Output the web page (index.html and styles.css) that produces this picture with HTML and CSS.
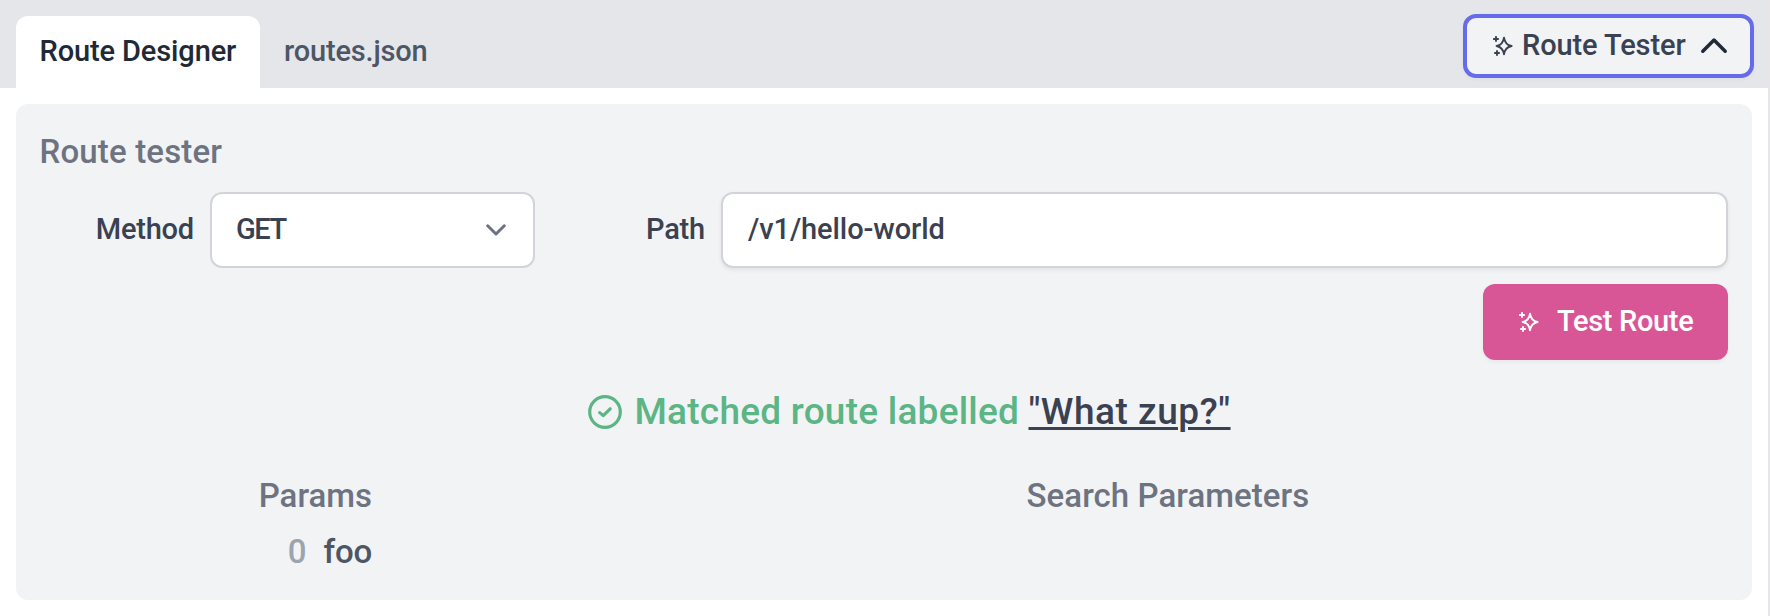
FILE: index.html
```html
<!DOCTYPE html>
<html lang="en">
<head>
<meta charset="utf-8">
<title>Route Designer</title>
<link rel="stylesheet" href="styles.css">
</head>
<body>
<svg class="defs" width="0" height="0" aria-hidden="true">
  <symbol id="sparkles" viewBox="0 0 20 20">
    <path d="M11 1.6 Q12 8.8 18.6 10 Q12 11.2 11 18.4 Q10 11.2 3.6 10 Q10 8.8 11 1.6 Z M3 .9 V5.1 M.9 3 H5.1 M4 14.9 V19.1 M1.9 17 H6.1" fill="none" stroke="currentColor" stroke-width="1.9" stroke-linecap="round" stroke-linejoin="round"/>
  </symbol>
</svg>
<div class="app">
  <header class="topbar">
    <nav class="tabs">
      <a class="tab tab-active">Route Designer</a>
      <a class="tab tab-file">routes.json</a>
    </nav>
    <button class="toggle" type="button">
      <svg class="sparkles" viewBox="0 0 20 20"><use href="#sparkles"/></svg>
      <span class="toggle-label">Route Tester</span>
      <svg class="toggle-chevron" viewBox="0 0 28 18"><path d="M2.8 14.2 L14 3 L25.2 14.2" fill="none" stroke="currentColor" stroke-width="3.5" stroke-linecap="round" stroke-linejoin="round"/></svg>
    </button>
  </header>
  <main class="panel">
    <h2 class="title">Route tester</h2>
    <form class="fields">
      <label class="label">Method</label>
      <div class="select"><span class="select-value">GET</span>
        <svg class="select-chevron" viewBox="0 0 20 12"><path d="M1.7 1.8 L10 10 L18.3 1.8" fill="none" stroke="currentColor" stroke-width="3" stroke-linecap="round" stroke-linejoin="round"/></svg>
      </div>
      <label class="label">Path</label>
      <div class="input">/v1/hello-world</div>
    </form>
    <div class="actions">
      <button class="submit" type="button">
        <svg class="sparkles" viewBox="0 0 20 20"><use href="#sparkles"/></svg>
        <span>Test Route</span>
      </button>
    </div>
    <p class="result">
      <svg class="check" viewBox="0 0 34 34"><circle cx="17" cy="17" r="15.3" fill="none" stroke="currentColor" stroke-width="3.2"/><path d="M11.7 17.6 L15.2 20.6 L22.2 13.8" fill="none" stroke="currentColor" stroke-width="3.2" stroke-linecap="round" stroke-linejoin="round"/></svg>
      <span class="matched">Matched route labelled</span>
      <a class="route-link">"What zup?"</a>
    </p>
    <div class="columns">
      <section class="params">
        <h3 class="heading">Params</h3>
        <div class="param"><span class="index">0</span><span class="name">foo</span></div>
      </section>
      <section class="search">
        <h3 class="heading">Search Parameters</h3>
      </section>
    </div>
  </main>
</div>
</body>
</html>
```
FILE: styles.css
```css
* { box-sizing: border-box; }
body {
  margin: 0;
  background: #fff;
  color: #3a4151;
  font: 500 29px/36px Roboto, "Noto Sans", sans-serif;
}
button { font: inherit; }
h2, h3, p { margin: 0; font-weight: 500; }
svg { display: block; flex: none; }
.defs { position: absolute; }
.app { width: 1770px; height: 616px; border-right: 2px solid #e6e6e8; }

.topbar {
  display: flex;
  justify-content: space-between;
  align-items: flex-start;
  height: 88px;
  padding: 14px 14px 0 16px;
  background: #e5e6ea;
}
.tabs { display: flex; padding-top: 2px; }
.tab { height: 72px; line-height: 70px; white-space: nowrap; }
.tab-active {
  width: 244px;
  padding-left: 23.5px;
  border-radius: 12px 12px 0 0;
  background: #fff;
  color: #212937;
  letter-spacing: -.12px;
}
.tab-file { padding-left: 24px; color: #4e5665; letter-spacing: -.18px; }
.toggle {
  display: flex;
  align-items: center;
  width: 291px;
  height: 64px;
  padding: 0 0 0 26px;
  border: 4px solid #666bec;
  border-radius: 13px;
  background: #f2f3f5;
  color: #3a4151;
  box-shadow: 0 2px 4px rgba(0, 0, 0, .03);
}
.sparkles { width: 20px; height: 20px; }
.toggle-label { margin: -2px 0 0 9px; width: 179px; text-align: left; letter-spacing: -.1px; white-space: nowrap; }
.toggle-chevron { width: 28px; height: 18px; margin-left: -1.5px; color: #212937; }

.panel {
  width: 1736px;
  height: 496px;
  margin: 16px 0 0 16px;
  padding: 24px 24px 0;
  border-radius: 12px;
  background: #f2f3f5;
}
.title { margin-left: -.5px; font-size: 33px; line-height: 48px; letter-spacing: .16px; color: #6d7381; }
.fields {
  display: grid;
  grid-template-columns: 154px 325px 154px 1007px;
  column-gap: 16px;
  margin-top: 16px;
  line-height: 74px;
}
.label { text-align: right; height: 76px; letter-spacing: -.2px; }
.select, .input {
  height: 76px;
  line-height: 70px;
  border: 2px solid #d2d4da;
  border-radius: 12px;
  background: #fff;
}
.select { display: flex; align-items: center; justify-content: space-between; padding: 0 27px 0 24px; }
.select-value { letter-spacing: -1.5px; margin-top: -2px; }
.select-chevron { width: 20px; height: 12px; color: #6d7381; }
.input { padding-left: 25px; letter-spacing: -.1px; box-shadow: 0 2px 4px rgba(0, 0, 0, .07); }
.actions { display: flex; justify-content: flex-end; margin-top: 16px; }
.submit {
  display: flex;
  align-items: center;
  gap: 18px;
  width: 245px;
  height: 76px;
  padding: 0 0 0 36px;
  border: 0;
  border-radius: 12px;
  background: #d85696;
  color: #fff;
  letter-spacing: -.33px;
  white-space: nowrap;
  box-shadow: 0 2px 4px rgba(0, 0, 0, .05);
}
.submit span { margin-top: -2px; }
.result {
  display: flex;
  align-items: center;
  margin-top: 28px;
  padding-left: 548px;
  font-size: 37px;
  line-height: 47px;
  white-space: nowrap;
  color: #5bb585;
}
.check { width: 34px; height: 34px; }
.matched { margin-left: 12.5px; width: 394px; letter-spacing: .24px; }
.route-link {
  color: #3a4151;
  letter-spacing: .53px;
  text-decoration: underline;
  text-decoration-thickness: 3px;
  text-underline-offset: 3px;
}
.columns { display: grid; grid-template-columns: 332px 1fr; margin-top: 41px; font-size: 33px; line-height: 40px; }
.heading { font-size: 33px; color: #6d7381; }
.params { text-align: right; }
.param { display: flex; justify-content: flex-end; gap: 17px; margin-top: 16px; }
.index { color: #9da3af; }
.name { letter-spacing: -.2px; color: #4e5665; }
.search { padding-left: 654.5px; }
.search .heading { letter-spacing: .06px; }
```
